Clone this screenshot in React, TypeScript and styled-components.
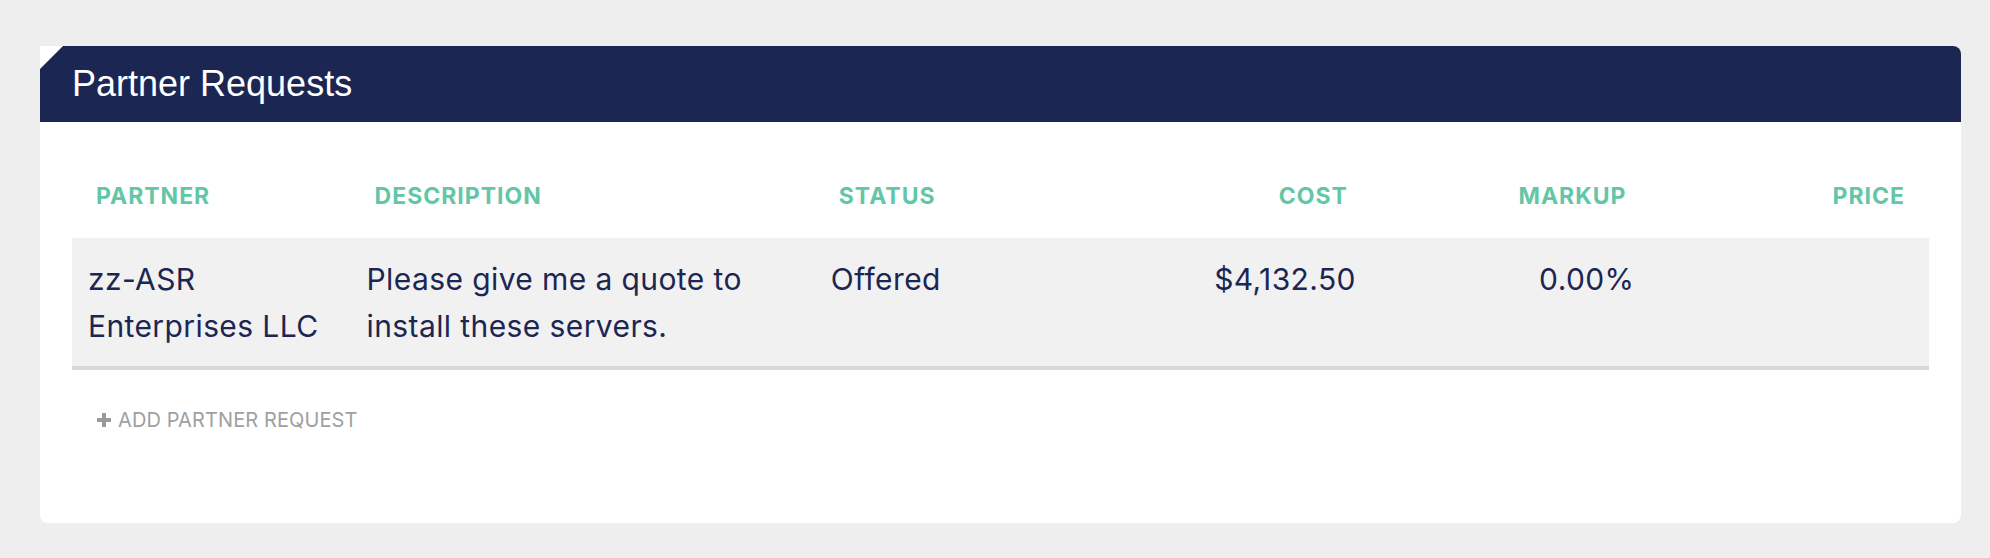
import React from "react";
import styled, { createGlobalStyle } from "styled-components";

type Request = {
  partner: string;
  description: string;
  status: string;
  cost: string;
  markup: string;
  price: string;
};

const requests: Request[] = [
  {
    partner: "zz-ASR Enterprises LLC",
    description: "Please give me a quote to install these servers.",
    status: "Offered",
    cost: "$4,132.50",
    markup: "0.00%",
    price: "",
  },
];

const columns = [
  { key: "partner", label: "Partner", width: "15%", align: "left" },
  { key: "description", label: "Description", width: "25%", align: "left" },
  { key: "status", label: "Status", width: "15%", align: "left" },
  { key: "cost", label: "Cost", width: "15%", align: "right" },
  { key: "markup", label: "Markup", width: "15%", align: "right" },
  { key: "price", label: "Price", width: "15%", align: "right" },
] as const;

export default function App() {
  return (
    <>
      <GlobalStyle />
      <Page>
        <Card>
          <CardHeader>
            <Title>Partner Requests</Title>
          </CardHeader>
          <CardBody>
            <Table>
              <colgroup>
                {columns.map((c) => (
                  <col key={c.key} style={{ width: c.width }} />
                ))}
              </colgroup>
              <thead>
                <tr>
                  {columns.map((c) => (
                    <HeadCell key={c.key} $align={c.align}>
                      {c.label}
                    </HeadCell>
                  ))}
                </tr>
              </thead>
              <tbody>
                {requests.map((r, i) => (
                  <Row key={i}>
                    {columns.map((c) => (
                      <Cell key={c.key} $align={c.align}>
                        {r[c.key]}
                      </Cell>
                    ))}
                  </Row>
                ))}
              </tbody>
            </Table>
            <AddButton type="button">
              <PlusIcon viewBox="0 0 16 16">
                <path d="M6 1h4v5h5v4h-5v5H6v-5H1V6h5z" />
              </PlusIcon>
              Add Partner Request
            </AddButton>
          </CardBody>
        </Card>
      </Page>
    </>
  );
}

const GlobalStyle = createGlobalStyle`
  html, body {
    margin: 0;
    padding: 0;
    background: #eeeeee;
  }
  body {
    font-family: Inter, "Noto Sans", sans-serif;
  }
`;

const Page = styled.div`
  padding: 46px 29px 35px 40px;
`;

const Card = styled.div`
  background: #fff;
  border-radius: 0 8px 8px 8px;
  overflow: hidden;
`;

const CardHeader = styled.div`
  height: 76px;
  display: flex;
  align-items: center;
  padding-left: 32px;
  background: #1c2653;
  clip-path: polygon(23px 0, 100% 0, 100% 100%, 0 100%, 0 23px);
`;

const Title = styled.h2`
  margin: 0;
  font-family: "Liberation Sans", Arial, sans-serif;
  font-weight: 400;
  font-size: 36px;
  color: #fff;
`;

const CardBody = styled.div`
  padding: 32px 32px 91px 32px;
`;

const Table = styled.table`
  width: 100%;
  border-collapse: collapse;
  table-layout: fixed;
`;

const HeadCell = styled.th<{ $align: string }>`
  height: 84px;
  padding: 0 24px;
  text-align: ${(p) => p.$align};
  vertical-align: middle;
  font-size: 23px;
  font-weight: 700;
  letter-spacing: 1px;
  text-transform: uppercase;
  color: #62c6a7;
`;

const Row = styled.tr`
  background: #f1f1f1;
  border-bottom: 4px solid #d6d8dc;
`;

const Cell = styled.td<{ $align: string }>`
  height: 130px;
  box-sizing: border-box;
  padding: 18px 16px 0;
  text-align: ${(p) => p.$align};
  vertical-align: top;
  font-size: 30px;
  letter-spacing: 0.4px;
  line-height: 47px;
  color: #1c2653;
`;

const AddButton = styled.button`
  display: flex;
  align-items: center;
  gap: 6px;
  margin: 38px 0 0 24px;
  padding: 0;
  border: none;
  background: none;
  font-family: Inter, "Noto Sans", sans-serif;
  font-size: 20px;
  letter-spacing: 0.1px;
  text-transform: uppercase;
  color: #a0a0a0;
  cursor: pointer;
`;

const PlusIcon = styled.svg`
  width: 16px;
  height: 16px;
  fill: #9b9b9b;
`;
